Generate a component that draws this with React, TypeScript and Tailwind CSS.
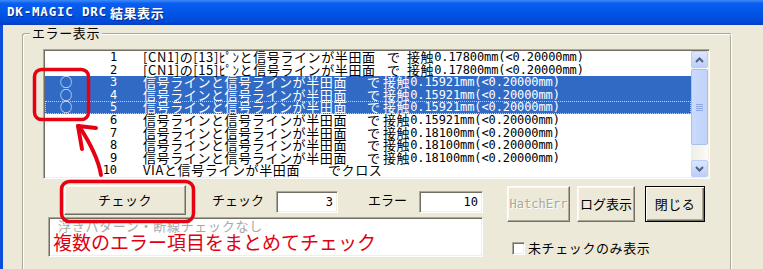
import React from "react"

// 一覧の行データ（a: 内容, b: 位置, v: 接触値 / 各列の幅は元画面の位置に合わせる）
type Row = {
  n: number
  mark?: boolean
  sel?: boolean
  focus?: boolean
  a: string
  b: string
  v?: string
  wa: string
  wb: string
}

const rows: Row[] = [
  { n: 1, a: "[CN1]の[13]ﾋﾟﾝと信号ラインが半田面", b: "で", v: "0.17800", wa: "w-[244px]", wb: "w-[20px]" },
  { n: 2, a: "[CN1]の[15]ﾋﾟﾝと信号ラインが半田面", b: "で", v: "0.17800", wa: "w-[244px]", wb: "w-[20px]" },
  { n: 3, mark: true, sel: true, a: "信号ラインと信号ラインが半田面", b: "で", v: "0.15921", wa: "w-[224px]", wb: "w-[16px]" },
  { n: 4, mark: true, sel: true, a: "信号ラインと信号ラインが半田面", b: "で", v: "0.15921", wa: "w-[224px]", wb: "w-[16px]" },
  { n: 5, mark: true, sel: true, focus: true, a: "信号ラインと信号ラインが半田面", b: "で", v: "0.15921", wa: "w-[224px]", wb: "w-[16px]" },
  { n: 6, a: "信号ラインと信号ラインが半田面", b: "で", v: "0.15921", wa: "w-[224px]", wb: "w-[16px]" },
  { n: 7, a: "信号ラインと信号ラインが半田面", b: "で", v: "0.18100", wa: "w-[224px]", wb: "w-[16px]" },
  { n: 8, a: "信号ラインと信号ラインが半田面", b: "で", v: "0.18100", wa: "w-[224px]", wb: "w-[16px]" },
  { n: 9, a: "信号ラインと信号ラインが半田面", b: "で", v: "0.18100", wa: "w-[224px]", wb: "w-[16px]" },
  { n: 10, a: "VIAと信号ラインが半田面", b: "でクロス", wa: "w-[185px]", wb: "" },
]

const ui = "font-['Noto_Sans_CJK_JP',sans-serif]"
const half = "font-['DejaVu_Sans_Mono','Liberation_Mono',monospace]"

// クラシックなボタンの枠
const btn =
  "flex items-center justify-center bg-[#ece9d8] border border-t-white border-l-white border-r-[#716f64] border-b-[#716f64] shadow-[inset_-1px_-1px_0_#aca899,inset_1px_1px_0_#f8f7f1]"
const sunken =
  "bg-white border border-t-[#aca899] border-l-[#aca899] border-r-white border-b-white shadow-[inset_1px_1px_0_#716f64,inset_-1px_-1px_0_#f1efe2]"

function Chevron({ up }: { up?: boolean }) {
  return (
    <svg width="9" height="6" viewBox="0 0 9 6">
      <path
        d={up ? "M1 5 L4.5 1.5 L8 5" : "M1 1 L4.5 4.5 L8 1"}
        fill="none"
        stroke="#4d6185"
        strokeWidth="2"
      />
    </svg>
  )
}

function ScrollBar() {
  const arrowBtn =
    "h-[17px] flex items-center justify-center rounded-[2px] border border-[#bccffa] bg-[linear-gradient(to_bottom,#dce7fe,#bccdf8)]"
  return (
    <div className="w-[17px] h-full flex flex-col bg-[linear-gradient(to_right,#eeede5,#fbfbf8)]">
      <div className={arrowBtn}>
        <Chevron up />
      </div>
      <div className="flex-1 pt-[1px]">
        <div className="h-[76px] rounded-[2px] border border-[#a9bff0] bg-[linear-gradient(to_right,#cbdafc,#c1d3fc)] flex flex-col items-center justify-center gap-[1px]">
          <div className="w-[7px] h-[1px] bg-[#8ea6e0]" />
          <div className="w-[7px] h-[1px] bg-[#8ea6e0]" />
          <div className="w-[7px] h-[1px] bg-[#8ea6e0]" />
          <div className="w-[7px] h-[1px] bg-[#8ea6e0]" />
        </div>
      </div>
      <div className={arrowBtn}>
        <Chevron />
      </div>
    </div>
  )
}

export default function App() {
  return (
    <div className={`relative w-[763px] h-[269px] overflow-hidden bg-[#ece9d8] flex flex-col ${ui}`}>
      {/* タイトルバー */}
      <div className="h-[25px] shrink-0 flex items-center pl-[7px] text-white font-bold text-[13px] [text-shadow:1px_1px_0_#0c2a8a] bg-[linear-gradient(to_bottom,#3d8af7_0%,#0a5ef0_14%,#0056e6_50%,#004bdb_85%,#0a3ebd_100%)]">
        <span className={`${half} text-[12.5px] tracking-[0.8px]`}>DK-MAGIC DRC</span>
        <span className="ml-[3px] tracking-[0.6px]">結果表示</span>
      </div>

      <div className="flex-1 flex">
        <div className="w-[3px] shrink-0 bg-[#0b4ddc]" />

        {/* エラー表示グループ */}
        <div className="relative ml-[19px] mt-[8px] w-[710px] h-[260px] rounded-[3px] border border-[#aca899] border-r-white border-b-white shadow-[inset_1px_1px_0_#fff,inset_-1px_-1px_0_#aca899] pt-[15px] pl-[20px]">
          <span className="absolute -top-[9px] left-[7px] px-[2px] bg-[#ece9d8] text-[13px] leading-[16px] tracking-[0.6px] text-black">
            エラー表示
          </span>

          {/* リストボックス */}
          <div className={`w-[667px] h-[130px] flex overflow-hidden ${sunken} p-[1px]`}>
            <div className="flex-1 overflow-hidden text-[13px] tracking-[0.6px] text-black">
              {rows.map((r) => (
                <div
                  key={r.n}
                  className={`h-[12.6px] leading-[12.6px] flex items-center whitespace-pre ${
                    r.sel ? "bg-[#316ac5] text-white" : ""
                  } ${r.focus ? "outline outline-1 outline-dotted -outline-offset-1 outline-[#c7cfe0]" : ""}`}
                >
                  <span className="ml-[14px] w-[14px] flex justify-center text-[12.5px] leading-none tracking-normal">
                    {r.mark ? "○" : ""}
                  </span>
                  <span className={`w-[44px] text-right ${half} text-[12px] tracking-[-0.1px]`}>{r.n}</span>
                  <span className={`ml-[26px] shrink-0 ${r.wa}`}>{r.a}</span>
                  <span className={`shrink-0 ${r.wb}`}>{r.b}</span>
                  {r.v && (
                    <>
                      <span className="shrink-0">接触</span>
                      <span className={`shrink-0 ${half} text-[12px] tracking-[-0.1px]`}>{`${r.v}mm(<0.20000mm)`}</span>
                    </>
                  )}
                </div>
              ))}
            </div>
            <ScrollBar />
          </div>

          {/* 操作部 */}
          <div className="flex">
            <div className="ml-[5px] w-[435px] flex flex-col">
              <div className="h-[38px] pt-[6px] flex items-start text-[13px] text-black">
                <div className={`${btn} ml-[16px] w-[122px] h-[30px] tracking-[0.5px]`}>チェック</div>
                <span className="ml-[26px] mt-[7px] leading-[16px]">チェック</span>
                <div className={`${sunken} ml-[12px] mt-[6px] w-[62px] h-[22px] flex items-center justify-end pr-[4px] ${half} text-[12px]`}>
                  3
                </div>
                <span className="ml-[30px] mt-[7px] leading-[16px]">エラー</span>
                <div className={`${sunken} ml-[12px] mt-[6px] w-[64px] h-[22px] flex items-center justify-end pr-[4px] ${half} text-[12px]`}>
                  10
                </div>
              </div>
              <div className={`${sunken} h-[40px] overflow-hidden pl-[9px] pr-[4px]`}>
                <div className="mt-[1px] text-[13px] leading-[13px] tracking-[0.7px] text-[#a8a8a8] whitespace-nowrap">
                  浮きパターン・断線チェックなし
                </div>
                <div className="-ml-[5px] -mt-[1px] text-[19px] leading-[22px] text-[#e00010] whitespace-nowrap">
                  複数のエラー項目をまとめてチェック
                </div>
              </div>
            </div>

            <div className="ml-[24px] flex flex-col">
              <div className="mt-[7px] flex text-[13px] text-black">
                <div className={`${btn} w-[63px] h-[36px] ${half} text-[12px] text-[#aca899] [text-shadow:1px_1px_0_#fff]`}>
                  HatchErr
                </div>
                <div className={`${btn} ml-[7px] w-[58px] h-[36px]`}>ログ表示</div>
                <div className="ml-[10px] w-[60px] h-[36px] flex items-center justify-center bg-[#ece9d8] border border-black shadow-[inset_1px_1px_0_#fff,inset_-1px_-1px_0_#716f64,inset_-2px_-2px_0_#aca899] tracking-[0.5px]">
                  閉じる
                </div>
              </div>
              <div className="mt-[18px] flex items-center text-[13px] text-black">
                <div className={`${sunken} ml-[5px] w-[13px] h-[13px]`} />
                <span className="ml-[3px] tracking-[0.6px] leading-[16px]">未チェックのみ表示</span>
              </div>
            </div>
          </div>
        </div>
      </div>

      {/* 赤い注釈 */}
      <svg className="absolute inset-0 pointer-events-none" width="763" height="269" viewBox="0 0 763 269">
        <g fill="none" stroke="#e60012" strokeLinecap="round" strokeLinejoin="round">
          <rect x="34.5" y="69.5" width="54" height="50" rx="7" strokeWidth="3.5" />
          <rect x="61.5" y="181.5" width="132" height="40" rx="8" strokeWidth="3.5" />
          <path d="M101 175 C99 162 92 146 79 126" strokeWidth="4" />
          <path d="M78 126 L96 128" strokeWidth="4" />
          <path d="M78 126 L82 149" strokeWidth="4" />
        </g>
      </svg>
    </div>
  )
}
